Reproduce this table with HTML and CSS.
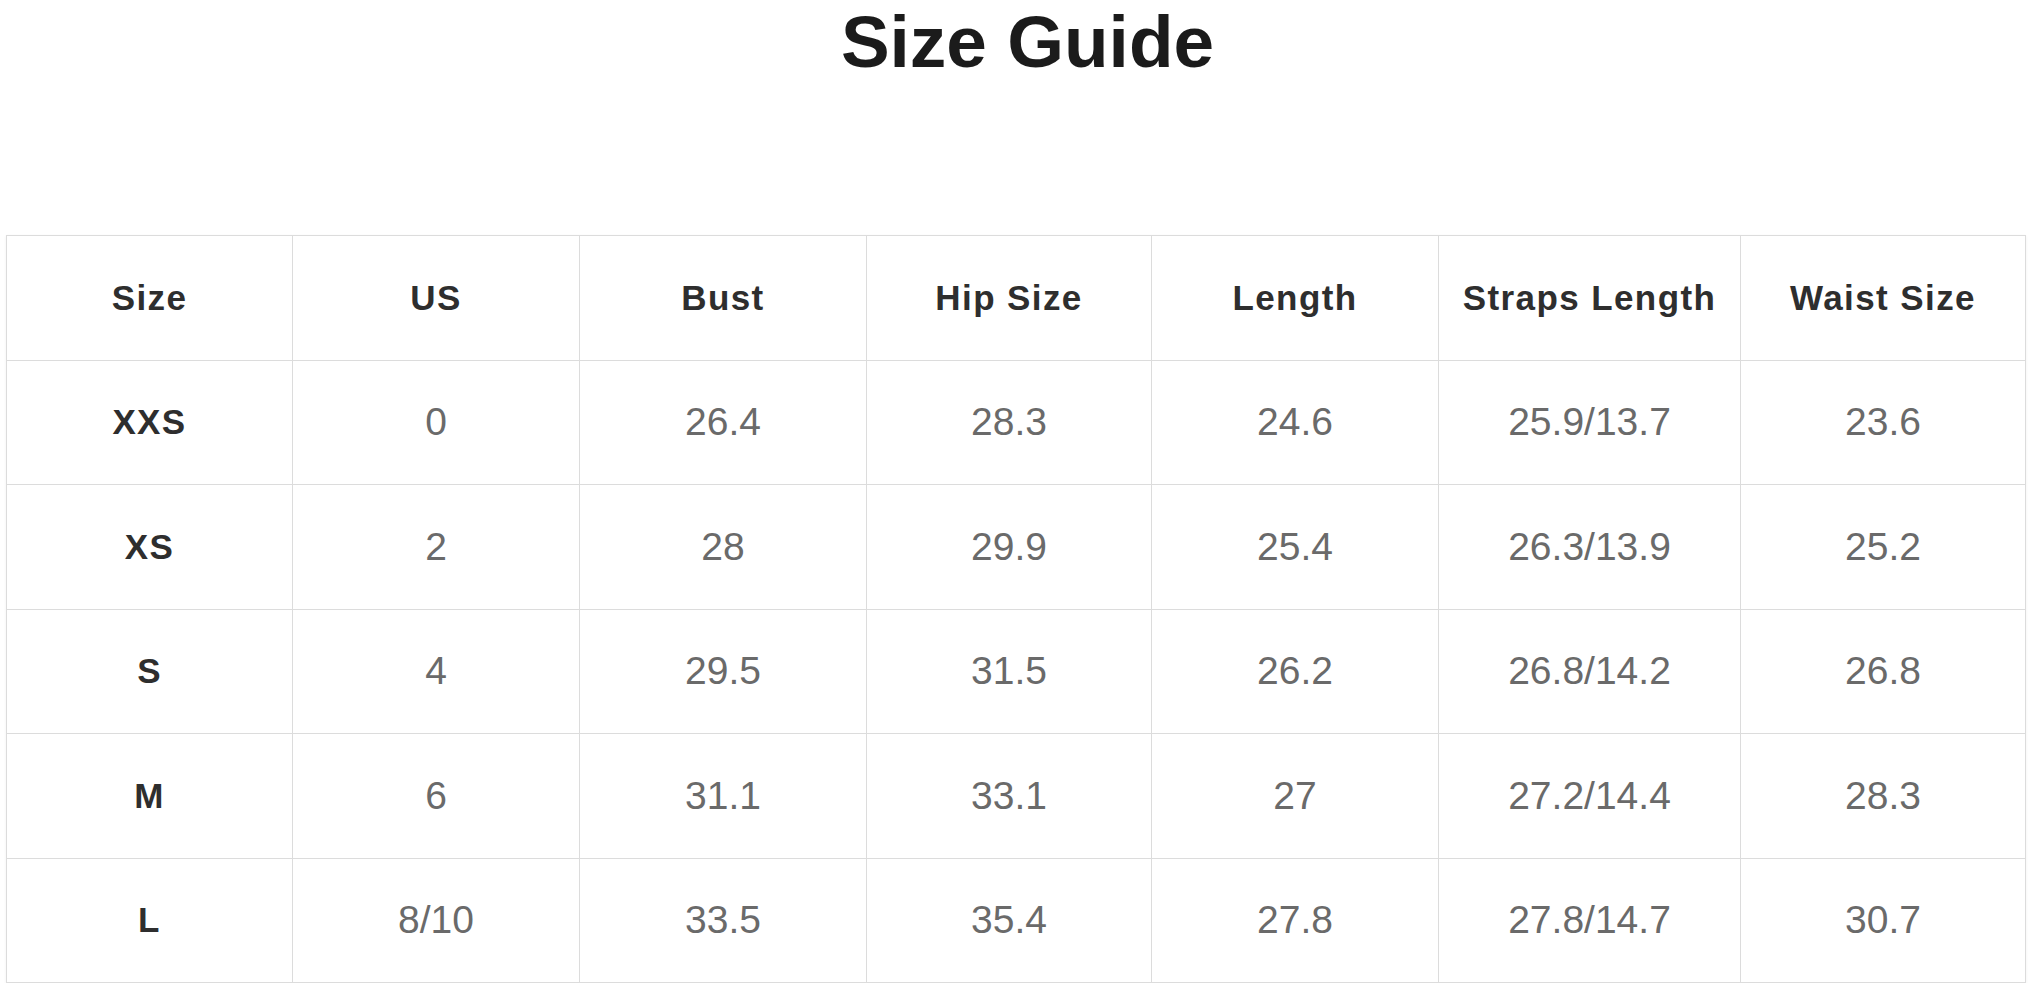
FILE: index.html
```html
<!DOCTYPE html>
<html lang="en">
<head>
<meta charset="utf-8">
<title>Size Guide</title>
<link rel="stylesheet" href="styles.css">
</head>
<body>
<h1 class="title">Size Guide</h1>
<table class="guide">
  <colgroup>
    <col class="c1"><col class="c2"><col class="c3"><col class="c4"><col class="c5"><col class="c6"><col class="c7">
  </colgroup>
  <thead>
    <tr>
      <th>Size</th><th>US</th><th>Bust</th><th>Hip Size</th><th>Length</th><th>Straps Length</th><th>Waist Size</th>
    </tr>
  </thead>
  <tbody>
    <tr><th>XXS</th><td>0</td><td>26.4</td><td>28.3</td><td>24.6</td><td>25.9/13.7</td><td>23.6</td></tr>
    <tr><th>XS</th><td>2</td><td>28</td><td>29.9</td><td>25.4</td><td>26.3/13.9</td><td>25.2</td></tr>
    <tr><th>S</th><td>4</td><td>29.5</td><td>31.5</td><td>26.2</td><td>26.8/14.2</td><td>26.8</td></tr>
    <tr><th>M</th><td>6</td><td>31.1</td><td>33.1</td><td>27</td><td>27.2/14.4</td><td>28.3</td></tr>
    <tr><th>L</th><td>8/10</td><td>33.5</td><td>35.4</td><td>27.8</td><td>27.8/14.7</td><td>30.7</td></tr>
  </tbody>
</table>
</body>
</html>
```

FILE: styles.css
```css
html, body {
  margin: 0;
  padding: 0;
  background: #ffffff;
}

body {
  font-family: "Liberation Sans", Arial, sans-serif;
}

.title {
  margin: 0;
  height: 84px;
  line-height: 84px;
  text-align: center;
  font-size: 73px;
  font-weight: 700;
  color: #1b1b1b;
  padding-left: 20px;
}

.guide {
  margin: 151px 0 0 6px;
  width: 2019px;
  border-collapse: collapse;
  table-layout: fixed;
  border: 1px solid #d8d8d8;
  box-shadow: 0 1px 3px rgba(0, 0, 0, 0.06);
}

.c1 { width: 286px; }
.c2 { width: 287px; }
.c3 { width: 287px; }
.c4 { width: 285px; }
.c5 { width: 287px; }
.c6 { width: 302px; }
.c7 { width: 285px; }

.guide tr {
  height: 124.5px;
}

.guide th,
.guide td {
  border: 1px solid #dcdcdc;
  padding: 0;
  text-align: center;
  vertical-align: middle;
}

.guide th {
  font-family: "Liberation Sans", Arial, sans-serif;
  font-weight: 700;
  font-size: 35px;
  letter-spacing: 1.4px;
  color: #2e2e2e;
}

.guide td {
  font-family: "Liberation Sans Narrow", "Liberation Sans", Arial, sans-serif;
  font-stretch: condensed;
  font-weight: 400;
  font-size: 39px;
  color: #6a6a6a;
}
```
